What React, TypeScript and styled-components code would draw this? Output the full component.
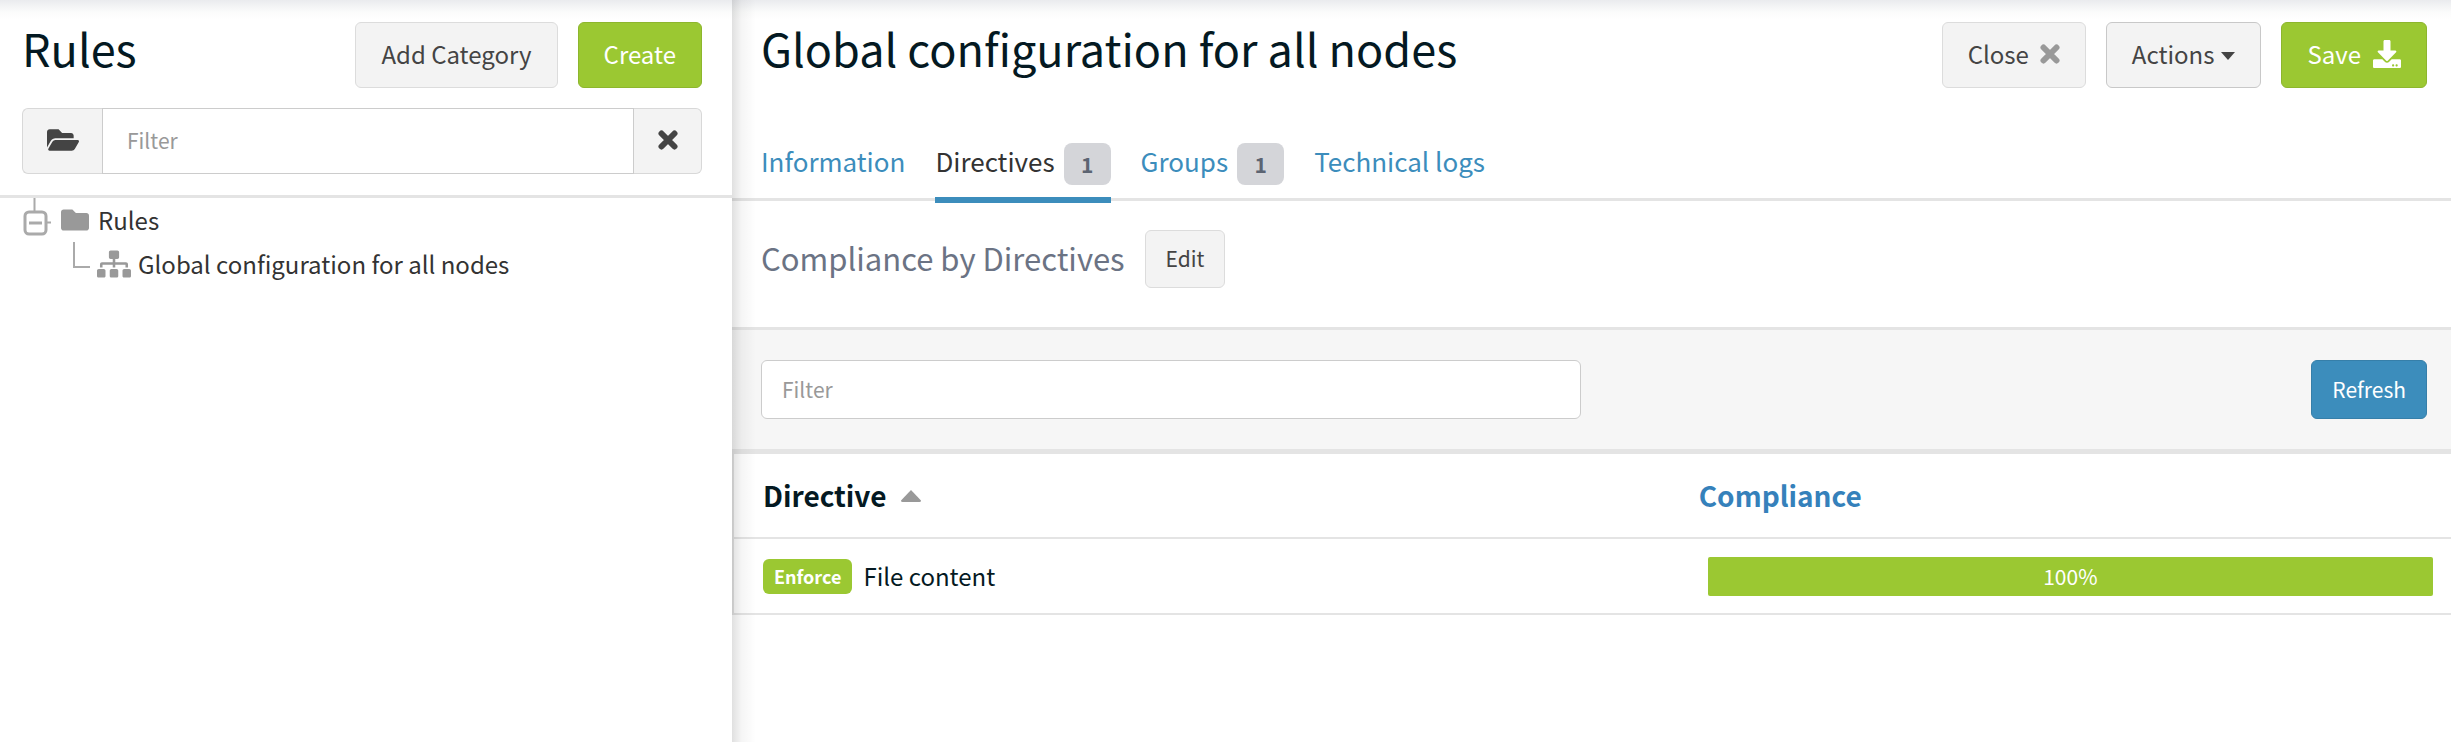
import React from "react";
import styled, { createGlobalStyle, css } from "styled-components";
import { FaFolderOpen, FaFolder, FaSitemap, FaDownload } from "react-icons/fa";

const GlobalStyle = createGlobalStyle`
  *, *::before, *::after { box-sizing: border-box; }
  html, body, #root { height: 100%; }
  body {
    margin: 0;
    background: #fff;
    color: #041922;
    font-family: "Noto Sans CJK SC", "Noto Sans", sans-serif;
    font-size: 24px;
    line-height: 36px;
  }
  button, input { font: inherit; margin: 0; }
  a { text-decoration: none; }
`;

const Page = styled.div`
  position: relative;
  display: grid;
  grid-template-columns: 732fr 1719fr;
  min-height: 100%;
`;

const TopShade = styled.div`
  position: absolute;
  inset: 0 0 auto 0;
  height: 20px;
  background: linear-gradient(rgba(50, 60, 90, 0.1), rgba(50, 90, 70, 0.02) 60%, transparent);
  pointer-events: none;
`;

const Sidebar = styled.aside`
  min-width: 0;
`;

const SidebarHeader = styled.header`
  padding: 22px 30px 21px 22px;
  border-bottom: 3px solid #e4e4e4;
`;

const Bar = styled.div`
  display: flex;
  align-items: flex-start;
  justify-content: space-between;
`;

const Actions = styled.div`
  display: flex;
  gap: 20px;
`;

const Title = styled.h1`
  margin: 0;
  font-size: 45px;
  line-height: 52px;
  font-weight: 400;
`;

type Tone = "default" | "outline" | "success" | "primary";

const tones = {
  default: css`background: #f3f3f3; border-color: #dcdcdc; color: #444;`,
  outline: css`background: #f3f3f3; border-color: #c8c8c8; color: #444;`,
  success: css`background: #9bc832; border-color: #8db62d; color: #fff;`,
  primary: css`background: #3c8dbc; border-color: #367fa9; color: #fff;`,
};

const Button = styled.button<{ $tone?: Tone; $small?: boolean }>`
  display: inline-flex;
  align-items: center;
  justify-content: center;
  height: ${(p) => (p.$small ? 58 : 66)}px;
  padding: 0 ${(p) => (p.$small ? 20 : 25)}px 2px;
  border: 1px solid;
  border-radius: 6px;
  font-size: ${(p) => (p.$small ? 21 : 24)}px;
  white-space: nowrap;
  cursor: pointer;
  ${(p) => tones[p.$tone ?? "default"]}
`;

const CrossSvg = styled.svg<{ $muted?: boolean }>`
  flex: none;
  margin-left: ${(p) => (p.$muted ? 11 : 0)}px;
  fill: none;
  stroke: ${(p) => (p.$muted ? "#999" : "#444")};
  stroke-width: 6;
  stroke-linecap: round;
`;

const Cross = ({ muted }: { muted?: boolean }) => (
  <CrossSvg $muted={muted} width="20" height="20" viewBox="0 0 20 20" aria-hidden="true">
    <path d="M3.500 3.500L16.500 16.500M16.500 3.500L3.500 16.500" />
  </CrossSvg>
);

const SaveIcon = styled(FaDownload)`
  margin-left: 12px;
`;

const Caret = styled.span`
  margin: 4px 0 0 7px;
  border: 7px solid transparent;
  border-top: 8px solid #444;
  border-bottom: 0;
`;

const FilterGroup = styled.div`
  display: flex;
  height: 66px;
  margin-top: 20px;
`;

const Addon = styled.button<{ $side: "left" | "right" }>`
  display: flex;
  align-items: center;
  justify-content: center;
  width: ${(p) => (p.$side === "left" ? 80 : 68)}px;
  padding: 0 0 2px;
  border: 1px solid #d8d8d8;
  border-radius: ${(p) => (p.$side === "left" ? "6px 0 0 6px" : "0 6px 6px 0")};
  border-${(p) => (p.$side === "left" ? "right" : "left")}: 0;
  background: #f3f3f3;
  color: #444;
  cursor: pointer;
`;

const TextInput = styled.input<{ $joined?: boolean }>`
  min-width: 0;
  flex: ${(p) => (p.$joined ? "1 1 0" : "0 0 49.2%")};
  height: ${(p) => (p.$joined ? 66 : 59)}px;
  padding: 0 ${(p) => (p.$joined ? 24 : 20)}px 2px;
  border: 1px solid #ccc;
  border-radius: ${(p) => (p.$joined ? 0 : 6)}px;
  background: #fff;
  color: #444;
  font-size: 21px;
  outline: none;
  &::placeholder { color: #999; opacity: 1; }
`;

const Tree = styled.ul`
  margin: 0;
  padding: 0;
  list-style: none;
  color: #333;
`;

const TreeRow = styled.li<{ $child?: boolean }>`
  display: flex;
  align-items: center;
  height: 44px;
  padding-left: ${(p) => (p.$child ? 73 : 22)}px;
`;

const Branch = styled.svg`
  flex: none;
  align-self: flex-start;
  fill: none;
  stroke: #aaa;
  stroke-width: 2;
`;

const TreeIcon = styled.span<{ $gap: number }>`
  display: flex;
  color: #999;
  margin: 0 ${(p) => p.$gap}px;
`;

const Main = styled.main`
  position: relative;
  min-width: 0;
  &::before {
    content: "";
    position: absolute;
    inset: 0 auto 0 0;
    width: 24px;
    background: linear-gradient(90deg, rgba(0, 0, 0, 0.12), rgba(0, 0, 0, 0.04) 40%, transparent);
    pointer-events: none;
  }
`;

const MainHeader = styled.header`
  padding: 22px 24px 0 29px;
`;

const Tabs = styled.nav`
  display: flex;
  gap: 30px;
  height: 79px;
  margin-top: 34px;
  padding: 0 29px;
  border-bottom: 3px solid #e4e4e4;
`;

const Tab = styled.a<{ $active?: boolean }>`
  display: flex;
  align-items: center;
  height: 81px;
  padding: 3px 0 ${(p) => (p.$active ? 0 : 6)}px;
  border-bottom: ${(p) => (p.$active ? "6px solid #3c8dbc" : "0")};
  color: ${(p) => (p.$active ? "#333" : "#3c8dbc")};
  font-size: 26px;
  white-space: nowrap;
`;

const Count = styled.span`
  margin: 6px 0 0 9px;
  width: 47px;
  height: 42px;
  border-radius: 8px;
  background: #d4d5d9;
  color: #5c6472;
  font-size: 21px;
  font-weight: 700;
  line-height: 42px;
  text-align: center;
`;

const Section = styled.div`
  display: flex;
  align-items: flex-start;
  gap: 20px;
  padding: 29px 29px 39px;
  border-bottom: 3px solid #e4e4e4;
`;

const SectionTitle = styled.h2`
  margin: 0;
  color: #6b7384;
  font-size: 31px;
  font-weight: 400;
  line-height: 56px;
`;

const Toolbar = styled.div`
  display: flex;
  justify-content: space-between;
  padding: 30px 24px 30px 29px;
  border-bottom: 5px solid #e4e4e4;
  background: #f6f6f6;
`;

const RefreshButton = styled(Button)`
  height: 59px;
`;

const Table = styled.table`
  width: 100%;
  table-layout: fixed;
  border-collapse: separate;
  border-spacing: 0;
  border-left: 2px solid #e4e4e4;
  text-align: left;
`;

const Th = styled.th<{ $width: string; $link?: boolean }>`
  width: ${(p) => p.$width};
  height: 85px;
  padding: 0 29px 2px;
  border-bottom: 2px solid #e4e4e4;
  color: ${(p) => (p.$link ? "#3581bb" : "inherit")};
  font-size: 28px;
  font-weight: 700;
`;

const SortArrow = styled.svg`
  margin-left: 14px;
  fill: #999;
  vertical-align: 5px;
`;

const Td = styled.td<{ $bar?: boolean }>`
  height: 76px;
  padding: ${(p) => (p.$bar ? "0 18px 0 38px" : "0 29px")};
  border-bottom: 2px solid #e4e4e4;
`;

const Directive = styled.div`
  display: flex;
  align-items: center;
  gap: 11px;
`;

const Mode = styled.span`
  padding: 0 11px;
  border-radius: 6px;
  background: #9bc832;
  color: #fff;
  font-size: 18px;
  font-weight: 700;
  line-height: 35px;
`;

const Progress = styled.div`
  height: 39px;
  border-radius: 2px;
  background: #9bc832;
  color: #fff;
  font-size: 21px;
  line-height: 39px;
  text-align: center;
`;

export default function App() {
  return (
    <>
      <GlobalStyle />
      <Page>
        <Sidebar>
          <SidebarHeader>
            <Bar>
              <Title>Rules</Title>
              <Actions>
                <Button>Add Category</Button>
                <Button $tone="success">Create</Button>
              </Actions>
            </Bar>
            <FilterGroup>
              <Addon $side="left" aria-label="Toggle folders"><FaFolderOpen size={32} /></Addon>
              <TextInput $joined placeholder="Filter" aria-label="Filter rules" />
              <Addon $side="right" aria-label="Clear filter"><Cross /></Addon>
            </FilterGroup>
          </SidebarHeader>
          <Tree>
            <TreeRow>
              <Branch width="30" height="44">
                <path d="M12.5 0V13M25 24.500H29" />
                <rect x="3" y="14" width="21" height="22" rx="4" strokeWidth="3" />
                <path d="M7 25H20" strokeWidth="3" />
              </Branch>
              <TreeIcon $gap={9}><FaFolder size={28} /></TreeIcon>
              <span>Rules</span>
            </TreeRow>
            <TreeRow $child>
              <Branch width="17" height="44"><path d="M1 0V25H17" /></Branch>
              <TreeIcon $gap={7}><FaSitemap size={34} /></TreeIcon>
              <span>Global configuration for all nodes</span>
            </TreeRow>
          </Tree>
        </Sidebar>

        <Main>
          <MainHeader>
            <Bar>
              <Title>Global configuration for all nodes</Title>
              <Actions>
                <Button>Close <Cross muted /></Button>
                <Button $tone="outline">Actions <Caret /></Button>
                <Button $tone="success">Save <SaveIcon size={28} /></Button>
              </Actions>
            </Bar>
          </MainHeader>
          <Tabs>
            <Tab href="#information">Information</Tab>
            <Tab href="#directives" $active>Directives<Count>1</Count></Tab>
            <Tab href="#groups">Groups<Count>1</Count></Tab>
            <Tab href="#logs">Technical logs</Tab>
          </Tabs>
          <Section>
            <SectionTitle>Compliance by Directives</SectionTitle>
            <Button $small>Edit</Button>
          </Section>
          <Toolbar>
            <TextInput placeholder="Filter" aria-label="Filter directives" />
            <RefreshButton $small $tone="primary">Refresh</RefreshButton>
          </Toolbar>
          <Table>
            <thead>
              <tr>
                <Th $width="54.5%">
                  Directive
                  <SortArrow width="20" height="12" viewBox="0 0 20 12"><path d="M10 0L20 10.500Q20 12 18.500 12H1.500Q0 12 0 10.500Z" /></SortArrow>
                </Th>
                <Th $width="45.5%" $link>Compliance</Th>
              </tr>
            </thead>
            <tbody>
              <tr>
                <Td><Directive><Mode>Enforce</Mode><span>File content</span></Directive></Td>
                <Td $bar><Progress>100%</Progress></Td>
              </tr>
            </tbody>
          </Table>
        </Main>
        <TopShade />
      </Page>
    </>
  );
}
